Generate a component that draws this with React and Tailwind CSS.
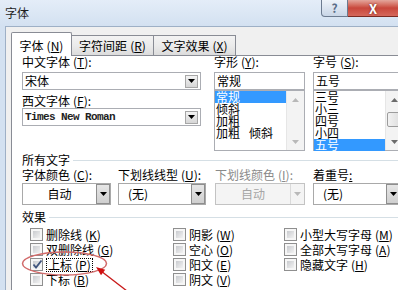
import React from "react";

const FONT = "font-['Noto_Sans_CJK_SC','Noto_Sans',sans-serif]";

const Mn = ({ t, k, c = true, cls = "" }) => (
  <span className={`whitespace-nowrap ${cls}`}>
    {t}
    <span className="ml-[3px]">(</span>
    <span className="underline underline-offset-[1px]">{k}</span>
    <span>)</span>
    {c ? ":" : ""}
  </span>
);

const Tri = ({ color = "#000", up = false }) => (
  <svg width="7" height="4" viewBox="0 0 7 4" className="block">
    <path d={up ? "M0 4h7L3.5 0z" : "M0 0h7L3.5 4z"} fill={color} />
  </svg>
);

const SmallArrowBtn = () => (
  <div className="w-[13px] h-[13px] border border-[#a7a7a7] bg-gradient-to-b from-[#f4f4f4] to-[#d6d6d6] flex items-center justify-center">
    <Tri />
  </div>
);

const ListScroll = ({ thumb }) => (
  <div className="w-[18px] h-full shrink-0 bg-[#f3f3f3] border-l border-[#e6e6e6] flex flex-col">
    <div className="h-[17px] flex items-center justify-center">
      <Tri up color={thumb ? "#6b6b6b" : "#b8b8b8"} />
    </div>
    <div className="flex-1 px-[1px]">
      {thumb && (
        <div className="mt-[4px] h-[15px] rounded-[2px] border border-[#9c9c9c] bg-gradient-to-r from-[#f2f2f2] to-[#dcdcdc]" />
      )}
    </div>
    <div className="h-[17px] flex items-center justify-center">
      <Tri color={thumb ? "#6b6b6b" : "#b8b8b8"} />
    </div>
  </div>
);

const Item = ({ children, sel }) => (
  <div
    className={`h-[12px] leading-[12px] pl-[1px] whitespace-nowrap ${
      sel ? "bg-[#3399ff] text-white" : ""
    }`}
  >
    {children}
  </div>
);

const Box = ({ checked }) => (
  <div className="relative w-[13px] h-[13px] shrink-0 border border-[#8f8f8f] bg-[#f6f6f6] p-[2px]">
    <div className="w-full h-full bg-gradient-to-br from-[#c9cbcf] to-[#f2f2f2]" />
    {checked && (
      <svg
        className="absolute left-[1px] top-[0px]"
        width="11"
        height="11"
        viewBox="0 0 11 11"
      >
        <path d="M1.5 5.5 L4 8.5 L9.5 1.5" stroke="#3f547d" strokeWidth="1.8" fill="none" />
      </svg>
    )}
  </div>
);

const Cb = ({ children, checked, focus }) => (
  <div className="h-[15px] flex items-center">
    <Box checked={checked} />
    <div
      className={`ml-[3px] leading-[12px] ${
        focus ? "border border-dotted border-black px-[1px] -ml-[0px]" : ""
      }`}
    >
      {children}
    </div>
  </div>
);

export default function App() {
  return (
    <div
      className={`relative w-[398px] h-[290px] overflow-hidden bg-[#d5e3f2] text-[12px] leading-[12px] text-black ${FONT}`}
    >
      {/* title bar */}
      <div className="h-[26px] flex items-start bg-gradient-to-b from-[#e4edf8] to-[#d3e1f1]">
        <div className="pl-[5px] pt-[6px] text-[12px] leading-[13px] text-[#1e1e1e]">字体</div>
        <div className="ml-auto flex h-[17px]">
          <div className="w-[27px] h-[17px] rounded-bl-[4px] border border-t-0 border-[#6c7b90] bg-gradient-to-b from-[#eef3f9] to-[#c9d6e7] flex items-center justify-center">
            <span className="text-[12px] leading-[12px] font-bold text-[#5b6d88]">?</span>
          </div>
          <div className="w-[50px] h-[17px] border-b border-[#7a2a22] bg-gradient-to-b from-[#e3a69c] via-[#c8463b] to-[#d5685c] flex items-center justify-center">
            <span className="text-[13px] leading-[13px] font-bold text-white [text-shadow:0_0_2px_#5a1a14]">X</span>
          </div>
        </div>
      </div>

      <div className="flex h-[264px]">
        <div className="w-[5px] shrink-0 bg-[#d3e1f1]" />
        <div className="flex-1 min-w-0 border-l border-t border-[#9eb0c6] bg-[#f0f0f0] pl-[5px] pt-[5px] flex flex-col">
          {/* tabs */}
          <div className="h-[23px] flex items-end shrink-0">
            <div className="relative z-10 w-[61px] h-[24px] -mb-[1px] bg-white border border-b-0 border-[#898c95] rounded-t-[2px] flex items-start justify-center pt-[7px]">
              <Mn t="字体" k="N" c={false} />
            </div>
            <div className="w-[82px] h-[20px] border-t border-r border-[#898c95] bg-gradient-to-b from-[#f3f3f3] via-[#ebebeb] to-[#dcdcdc] flex items-center justify-center">
              <Mn t="字符间距" k="R" c={false} />
            </div>
            <div className="w-[82px] h-[20px] border-t border-r border-[#898c95] bg-gradient-to-b from-[#f3f3f3] via-[#ebebeb] to-[#dcdcdc] flex items-center justify-center">
              <Mn t="文字效果" k="X" c={false} />
            </div>
          </div>

          {/* panel */}
          <div className="flex-1 min-w-0 overflow-hidden border-l border-t border-[#898c95] bg-white pl-[10px]">
            {/* top section */}
            <div className="flex">
              <div className="w-[179px] shrink-0 mr-[13px]">
                <div className="h-[12px]">
                  <Mn t="中文字体" k="T" />
                </div>
                <div className="mt-[4px] h-[18px] border border-[#abadb3] flex items-center pl-[2px] pr-[2px]">
                  <span className="flex-1">宋体</span>
                  <SmallArrowBtn />
                </div>
                <div className="mt-[5px] h-[12px]">
                  <Mn t="西文字体" k="F" />
                </div>
                <div className="mt-[1px] h-[18px] border border-[#abadb3] flex items-center pl-[2px] pr-[2px]">
                  <span className="flex-1 font-['Liberation_Mono',monospace] text-[11px] tracking-[-0.6px] font-bold text-[#222]">
                    Times New Roman
                  </span>
                  <SmallArrowBtn />
                </div>
              </div>

              <div className="w-[91px] shrink-0 mr-[8px]">
                <div className="h-[12px]">
                  <Mn t="字形" k="Y" />
                </div>
                <div className="mt-[4px] h-[18px] border border-[#abadb3] flex items-center pl-[2px]">
                  常规
                </div>
                <div className="h-[61px] border border-[#abadb3] flex">
                  <div className="flex-1 min-w-0">
                    <Item sel>常规</Item>
                    <Item>倾斜</Item>
                    <Item>加粗</Item>
                    <Item>
                      加粗<span className="ml-[9px]">倾斜</span>
                    </Item>
                  </div>
                  <ListScroll />
                </div>
              </div>

              <div className="w-[91px] shrink-0">
                <div className="h-[12px]">
                  <Mn t="字号" k="S" />
                </div>
                <div className="mt-[4px] h-[18px] border border-[#abadb3] flex items-center pl-[2px]">
                  五号
                </div>
                <div className="h-[61px] border border-[#abadb3] flex">
                  <div className="flex-1 min-w-0">
                    <Item>三号</Item>
                    <Item>小三</Item>
                    <Item>四号</Item>
                    <Item>小四</Item>
                    <Item sel>五号</Item>
                  </div>
                  <ListScroll thumb />
                </div>
              </div>
            </div>

            {/* 所有文字 */}
            <div className="mt-[3px] h-[12px] flex items-center">
              <span>所有文字</span>
              <div className="ml-[3px] flex-1 h-px bg-[#d5dfe5]" />
            </div>

            <div className="mt-[3px] flex">
              <div className="w-[96px] shrink-0">
                <div className="h-[12px]">
                  <Mn t="字体颜色" k="C" />
                </div>
                <div className="mt-[2px] w-[89px] h-[22px] border border-[#a9a9a9] flex">
                  <div className="flex-1 flex items-center justify-center">自动</div>
                  <div className="w-[14px] border border-[#8e8e8e] bg-gradient-to-b from-[#e6e6e6] to-[#cfcfcf] flex items-center justify-center">
                    <Tri />
                  </div>
                </div>
              </div>
              <div className="w-[97px] shrink-0">
                <div className="h-[12px]">
                  <Mn t="下划线线型" k="U" />
                </div>
                <div className="mt-[2px] w-[88px] h-[22px] border border-[#a9a9a9] flex">
                  <div className="flex-1 flex items-center pl-[9px]">(无)</div>
                  <div className="w-[14px] border border-[#8e8e8e] bg-gradient-to-b from-[#e6e6e6] to-[#cfcfcf] flex items-center justify-center">
                    <Tri />
                  </div>
                </div>
              </div>
              <div className="w-[98px] shrink-0">
                <div className="h-[12px] text-[#8a8a8a]">
                  <Mn t="下划线颜色" k="I" />
                </div>
                <div className="mt-[2px] w-[90px] h-[22px] border border-[#c3c3c3] bg-[#f4f4f4] flex">
                  <div className="flex-1 flex items-center justify-center text-[#a6a6a6]">自动</div>
                  <div className="w-[14px] border-l border-[#dadada] flex items-center justify-center">
                    <Tri color="#b9b9b9" />
                  </div>
                </div>
              </div>
              <div className="w-[100px] shrink-0">
                <div className="h-[12px]">
                  着重号<span className="underline underline-offset-[1px]">:</span>
                </div>
                <div className="mt-[2px] w-[88px] h-[22px] border border-[#a9a9a9] flex">
                  <div className="flex-1 flex items-center pl-[9px]">(无)</div>
                  <div className="w-[14px] border border-[#8e8e8e] bg-gradient-to-b from-[#e6e6e6] to-[#cfcfcf] flex items-center justify-center">
                    <Tri />
                  </div>
                </div>
              </div>
            </div>

            {/* 效果 */}
            <div className="mt-[6px] h-[12px] flex items-center">
              <span>效果</span>
              <div className="ml-[3px] flex-1 h-px bg-[#d5dfe5]" />
            </div>

            <div className="mt-[4px] ml-[8px] flex">
              <div className="w-[143px] shrink-0 flex flex-col">
                <Cb>
                  <Mn t="删除线" k="K" c={false} />
                </Cb>
                <Cb>
                  <Mn t="双删除线" k="G" c={false} />
                </Cb>
                <Cb checked focus>
                  <Mn t="上标" k="P" c={false} />
                </Cb>
                <Cb>
                  <Mn t="下标" k="B" c={false} />
                </Cb>
              </div>
              <div className="w-[111px] shrink-0 flex flex-col">
                <Cb>
                  <Mn t="阴影" k="W" c={false} />
                </Cb>
                <Cb>
                  <Mn t="空心" k="O" c={false} />
                </Cb>
                <Cb>
                  <Mn t="阳文" k="E" c={false} />
                </Cb>
                <Cb>
                  <Mn t="阴文" k="V" c={false} />
                </Cb>
              </div>
              <div className="flex flex-col shrink-0">
                <Cb>
                  <Mn t="小型大写字母" k="M" c={false} />
                </Cb>
                <Cb>
                  <Mn t="全部大写字母" k="A" c={false} />
                </Cb>
                <Cb>
                  <Mn t="隐藏文字" k="H" c={false} />
                </Cb>
              </div>
            </div>
          </div>
        </div>
      </div>

      {/* annotation overlay */}
      <svg
        className="absolute left-0 top-0 pointer-events-none"
        width="398"
        height="290"
        viewBox="0 0 398 290"
      >
        <ellipse cx="64.5" cy="263.5" rx="42" ry="11.5" fill="none" stroke="#d26a6a" strokeWidth="1.5" />
        <line x1="127" y1="291" x2="101" y2="271" stroke="#c81818" strokeWidth="1.3" />
        <polygon points="96,267 105.2,269.7 101,275.3" fill="#d01010" />
      </svg>
    </div>
  );
}
